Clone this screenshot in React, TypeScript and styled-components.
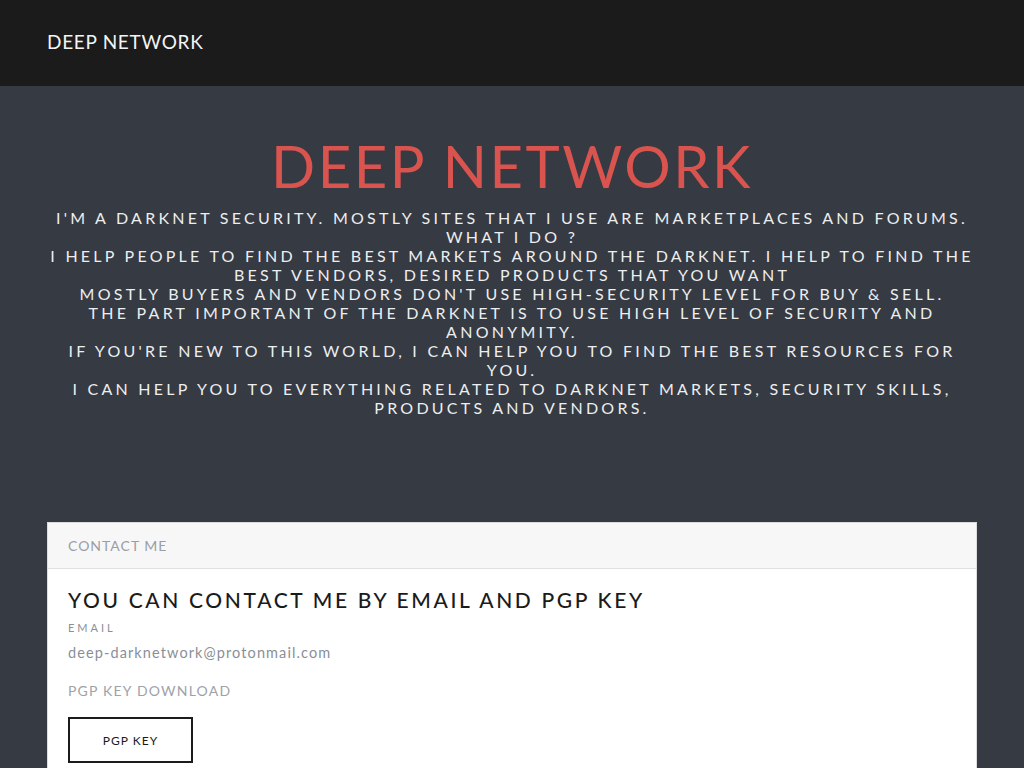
import React from 'react'
import styled, { createGlobalStyle } from 'styled-components'

const GlobalStyle = createGlobalStyle`
  html, body {
    margin: 0;
    padding: 0;
    background: #363a42;
    font-family: Lato, 'Noto Sans', sans-serif;
  }
  * {
    box-sizing: border-box;
  }
`

const lines = [
  "I'M A DARKNET SECURITY. MOSTLY SITES THAT I USE ARE MARKETPLACES AND FORUMS.",
  'WHAT I DO ?',
  'I HELP PEOPLE TO FIND THE BEST MARKETS AROUND THE DARKNET. I HELP TO FIND THE BEST VENDORS, DESIRED PRODUCTS THAT YOU WANT',
  "MOSTLY BUYERS AND VENDORS DON'T USE HIGH-SECURITY LEVEL FOR BUY & SELL.",
  'THE PART IMPORTANT OF THE DARKNET IS TO USE HIGH LEVEL OF SECURITY AND ANONYMITY.',
  "IF YOU'RE NEW TO THIS WORLD, I CAN HELP YOU TO FIND THE BEST RESOURCES FOR YOU.",
  'I CAN HELP YOU TO EVERYTHING RELATED TO DARKNET MARKETS, SECURITY SKILLS, PRODUCTS AND VENDORS.',
]

const App: React.FC = () => {
  return (
    <>
      <GlobalStyle />
      <TopBar>
        <Brand>DEEP NETWORK</Brand>
      </TopBar>
      <Hero>
        <Title>DEEP NETWORK</Title>
        <Intro>
          {lines.map(line => (
            <p key={line}>{line}</p>
          ))}
        </Intro>
      </Hero>
      <Section>
        <Card>
          <CardHeader>CONTACT ME</CardHeader>
          <CardBody>
            <CardTitle>YOU CAN CONTACT ME BY EMAIL AND PGP KEY</CardTitle>
            <Label>EMAIL</Label>
            <Email>deep-darknetwork@protonmail.com</Email>
            <Download>PGP KEY DOWNLOAD</Download>
            <Button>PGP KEY</Button>
          </CardBody>
        </Card>
      </Section>
    </>
  )
}

const TopBar = styled.header`
  height: 86px;
  background: #1b1b1b;
  display: flex;
  align-items: center;
  padding: 0 47px;
`

const Brand = styled.div`
  color: #f4f4f4;
  font-size: 19px;
  letter-spacing: 0.7px;
  padding-bottom: 3px;
`

const Hero = styled.section`
  padding: 48px 47px 0;
  text-align: center;
  height: 436px;
`

const Title = styled.h1`
  margin: 0;
  color: #d9534f;
  font-size: 58px;
  font-weight: 400;
  line-height: 64px;
  letter-spacing: 2.5px;
`

const Intro = styled.div`
  margin-top: 10px;
  color: #eceef0;
  font-size: 16px;
  line-height: 19px;
  letter-spacing: 3.25px;

  p {
    margin: 0;
  }
`

const Section = styled.section`
  padding: 0 47px;
`

const Card = styled.div`
  background: #fff;
  border: 1px solid #dcdcdc;
`

const CardHeader = styled.div`
  height: 46px;
  display: flex;
  align-items: center;
  padding: 0 20px;
  background: #f7f7f7;
  border-bottom: 1px solid #e0e0e0;
  color: #9a9ea5;
  font-size: 14px;
  letter-spacing: 1px;
`

const CardBody = styled.div`
  padding: 17px 20px 20px;
`

const CardTitle = styled.h2`
  margin: 0;
  color: #1b1b1b;
  font-size: 21px;
  font-weight: 500;
  line-height: 28px;
  letter-spacing: 2.65px;
`

const Label = styled.div`
  margin-top: 6px;
  color: #8a8f97;
  font-size: 11px;
  letter-spacing: 3px;
  line-height: 16px;
`

const Email = styled.div`
  margin-top: 7px;
  color: #8a8f97;
  font-size: 14.5px;
  letter-spacing: 1.1px;
  line-height: 20px;
`

const Download = styled.div`
  margin-top: 18px;
  color: #9ea2a9;
  font-size: 14px;
  letter-spacing: 1.2px;
  line-height: 20px;
`

const Button = styled.button`
  margin-top: 16px;
  width: 125px;
  height: 46px;
  background: #fff;
  border: 2px solid #1b1b1b;
  color: #1b1b1b;
  font-family: inherit;
  font-size: 12px;
  letter-spacing: 1px;
  cursor: pointer;
`

export default App
